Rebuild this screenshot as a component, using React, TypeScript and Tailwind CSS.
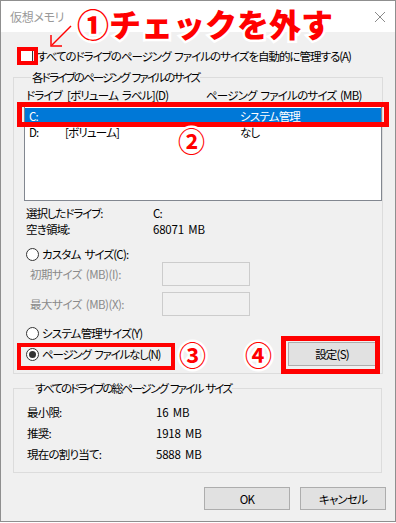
import React from 'react'

const font = "font-['Noto_Sans_CJK_JP','Noto_Sans',sans-serif] [font-feature-settings:'palt']"

function Radio({ checked }: { checked?: boolean }) {
  return (
    <span className="w-[13px] h-[13px] rounded-full border border-[#333] bg-white flex items-center justify-center shrink-0">
      {checked && <span className="w-[7px] h-[7px] rounded-full bg-[#333]" />}
    </span>
  )
}

function WinButton({ children, className = '' }: { children: React.ReactNode; className?: string }) {
  return (
    <div className={`h-[23px] border border-[#adadad] bg-[#e1e1e1] flex items-center justify-center text-black ${className}`}>
      {children}
    </div>
  )
}

// annotation text with a white halo
const halo = '[-webkit-text-stroke:5px_white] [paint-order:stroke_fill] tracking-normal'

export default function App() {
  return (
    <div className={`w-[396px] h-[523px] bg-white ${font} text-[11.5px] leading-[16px] tracking-[-0.8px] [word-spacing:2px] text-black`}>
      <div className="relative h-[522px] border border-[#8f8f8f] bg-[#f0f0f0] flex flex-col">
        {/* title bar */}
        <div className="h-[31px] bg-white flex items-center justify-between pl-[9px] pr-[8px] shrink-0">
          <span className="text-[#999] text-[12px] tracking-[-0.3px]">仮想メモリ</span>
          <svg width="12" height="12" viewBox="0 0 12 12" className="mr-[1px]">
            <path d="M1 1 L11 11 M11 1 L1 11" stroke="#8a8a8a" strokeWidth="1" />
          </svg>
        </div>

        {/* auto manage checkbox */}
        <div className="mt-[15px] h-[18px] flex items-center pl-[19px]">
          <span className="w-[13px] h-[13px] border border-[#333] bg-white shrink-0" />
          <span className="ml-[4px] whitespace-nowrap tracking-[-1px]">すべてのドライブのページング ファイルのサイズを自動的に管理する(A)</span>
        </div>

        {/* per drive group */}
        <fieldset className="mt-[4px] ml-[12px] w-[369px] border border-[#dcdcdc] pl-[10px] pb-[6px]">
          <legend className="ml-[7px] px-[1px] leading-[16px] tracking-[-1.8px]">各ドライブのページング ファイルのサイズ</legend>
          <div className="pt-[2px] h-[18px] flex pl-[2px] whitespace-nowrap">
            <span className="w-[41px]">ドライブ</span>
            <span className="w-[139px]">[ボリューム ラベル](D)</span>
            <span>ページング ファイルのサイズ (MB)</span>
          </div>
          <div className="mt-[2px] w-[358px] h-[96px] border border-[#828790] bg-white pt-[2px]">
            <div className="h-[16px] bg-[#0078d7] text-white flex pl-[4px]">
              <span className="w-[36px]">C:</span>
              <span className="w-[175px]"></span>
              <span>システム管理</span>
            </div>
            <div className="h-[16px] flex pl-[4px]">
              <span className="w-[36px]">D:</span>
              <span className="w-[175px]">[ボリューム]</span>
              <span>なし</span>
            </div>
          </div>

          <div className="mt-[4px] pl-[2px] flex h-[16px]">
            <span className="w-[127px] tracking-[-1.1px]">選択したドライブ:</span>
            <span>C:</span>
          </div>
          <div className="pl-[2px] flex h-[16px]">
            <span className="w-[127px]">空き領域:</span>
            <span className="tracking-[-0.2px]">68071 MB</span>
          </div>

          <div className="mt-[9px] pl-[2px] flex items-center h-[16px] gap-[3px]">
            <Radio />
            <span>カスタム サイズ(C):</span>
          </div>
          <div className="pl-[6px] flex items-center h-[24px] text-[#8a8a8a]">
            <span className="w-[132px] tracking-[-0.5px]">初期サイズ (MB)(I):</span>
            <span className="w-[88px] h-[24px] border border-[#cccccc] bg-[#f0f0f0]" />
          </div>
          <div className="mt-[6px] pl-[6px] flex items-center h-[24px] text-[#8a8a8a]">
            <span className="w-[132px] tracking-[-0.5px]">最大サイズ (MB)(X):</span>
            <span className="w-[88px] h-[24px] border border-[#cccccc] bg-[#f0f0f0]" />
          </div>

          <div className="mt-[9px] pl-[2px] flex items-center h-[16px] gap-[3px]">
            <Radio />
            <span>システム管理サイズ(Y)</span>
          </div>
          <div className="pl-[2px] flex items-center h-[26px]">
            <div className="flex items-center gap-[3px]">
              <Radio checked />
              <span className="tracking-[-1.2px]">ページング ファイルなし(N)</span>
            </div>
            <WinButton className="ml-auto mr-[6px] w-[88px] h-[24px]">設定(S)</WinButton>
          </div>
        </fieldset>

        {/* totals group */}
        <fieldset className="mt-[6px] ml-[12px] w-[369px] border border-[#dcdcdc] pl-[13px] pt-[5px] pb-[8px]">
          <legend className="ml-[7px] px-[1px] leading-[16px] tracking-[-1.8px]">すべてのドライブの総ページング ファイル サイズ</legend>
          {[
            ['最小限:', '16 MB'],
            ['推奨:', '1918 MB'],
            ['現在の割り当て:', '5888 MB'],
          ].map(([k, v]) => (
            <div key={k} className="h-[21px] flex items-center">
              <span className="w-[129px]">{k}</span>
              <span className="tracking-[-0.2px]">{v}</span>
            </div>
          ))}
        </fieldset>

        <div className="mt-[14px] flex justify-end gap-[10px] pr-[9px]">
          <WinButton className="w-[86px]">OK</WinButton>
          <WinButton className="w-[86px]">キャンセル</WinButton>
        </div>

        {/* annotations */}
        <div className={`absolute left-[76px] top-[3px] text-[32px] leading-[38px] font-black text-[#ff0000] whitespace-nowrap [font-feature-settings:normal] ${halo}`}>
          ①チェックを外す
        </div>
        <svg className="absolute left-[46px] top-[22px]" width="30" height="28" viewBox="0 0 30 28">
          <path d="M24 3 L5 22" stroke="#ff0000" strokeWidth="1.5" fill="none" />
          <path d="M4 12 L4 23 L15 23" stroke="#ff0000" strokeWidth="1.5" fill="none" />
        </svg>
        <div className="absolute left-[16px] top-[46px] w-[21px] h-[18px] border-4 border-[#ff0000]" />
        <div className="absolute left-[16px] top-[101px] w-[372px] h-[25px] border-[5px] border-[#ff0000]" />
        <div className={`absolute left-[177px] top-[124px] text-[27px] leading-[32px] font-bold text-[#ff0000] ${halo}`}>②</div>
        <div className="absolute left-[16px] top-[342px] w-[158px] h-[27px] border-4 border-[#ff0000]" />
        <div className={`absolute left-[178px] top-[338px] text-[27px] leading-[32px] font-bold text-[#ff0000] ${halo}`}>③</div>
        <div className={`absolute left-[244px] top-[338px] text-[27px] leading-[32px] font-bold text-[#ff0000] ${halo}`}>④</div>
        <div className="absolute left-[280px] top-[335px] w-[99px] h-[38px] border-[5px] border-[#ff0000]" />
      </div>
    </div>
  )
}
